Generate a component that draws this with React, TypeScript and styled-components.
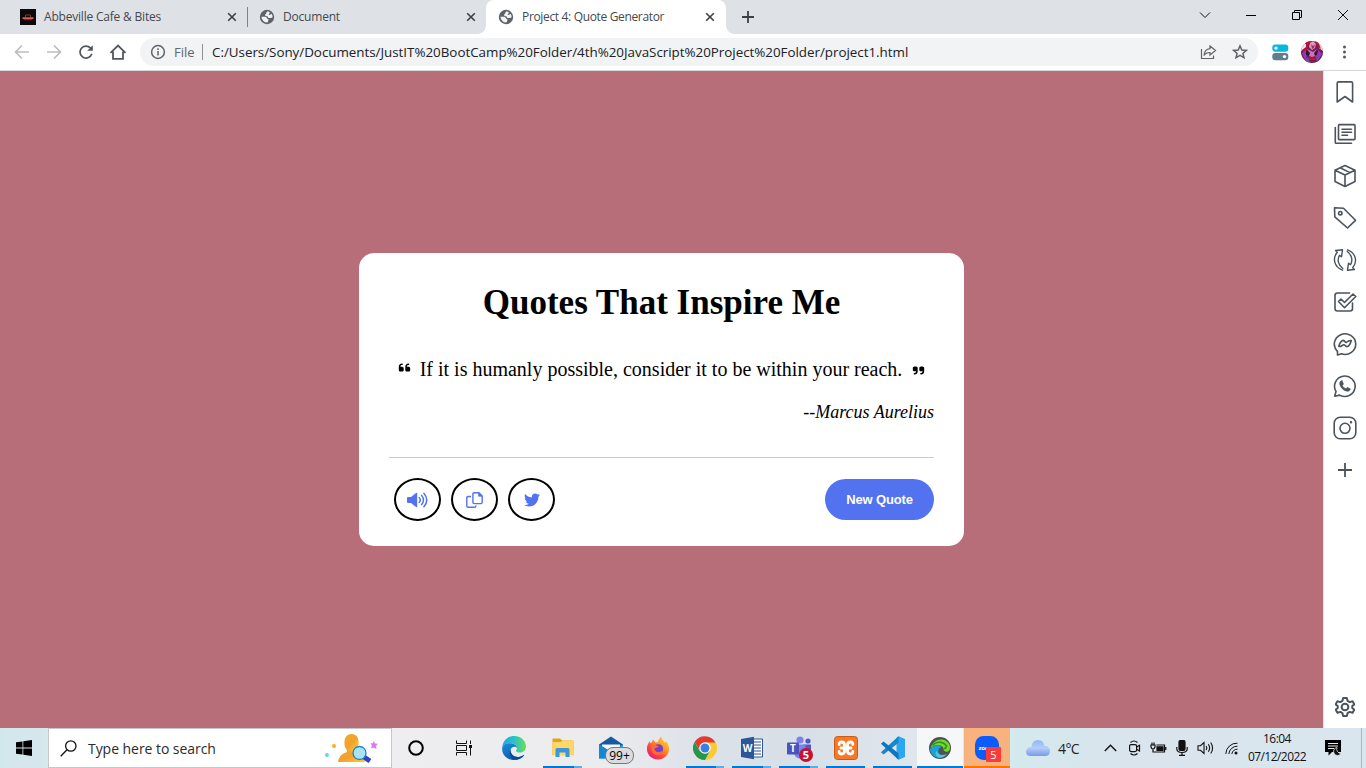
import React from "react";
import styled, { createGlobalStyle } from "styled-components";
import { FaTwitter, FaQuoteLeft, FaQuoteRight } from "react-icons/fa6";

const UI_FONT = '"Open Sans", "Noto Sans", sans-serif';

const GlobalStyle = createGlobalStyle`
  * { box-sizing: border-box; }
  body { margin: 0; overflow: hidden; }
  svg { display: block; flex: none; }
`;

const Screen = styled.div`
  display: flex;
  flex-direction: column;
  width: 1366px;
  height: 768px;
  font-family: ${UI_FONT};
  white-space: nowrap;
`;

/* Browser chrome */
const TabStrip = styled.div`
  display: flex;
  height: 34px;
  background: #dee1e6;
`;

const Tab = styled.div<{ $width: number; $left: number; $right: number; $active?: boolean; $divider?: boolean }>`
  position: relative;
  display: flex;
  align-items: center;
  width: ${(p) => p.$width}px;
  padding: 0 ${(p) => p.$right}px 0 ${(p) => p.$left}px;
  background: ${(p) => (p.$active ? "#fff" : "transparent")};
  border-radius: 8px 8px 0 0;
  ${(p) =>
    p.$divider &&
    `&::after { content: ""; position: absolute; right: 0; top: 7px; width: 1px; height: 20px; background: #808387; }`}
  ${(p) =>
    p.$active &&
    `&::before, &::after { content: ""; position: absolute; bottom: 0; width: 8px; height: 8px; }
     &::before { left: -8px; background: radial-gradient(circle at 0 0, transparent 7.5px, #fff 8px); }
     &::after { right: -8px; background: radial-gradient(circle at 100% 0, transparent 7.5px, #fff 8px); }`}
`;

const TabTitle = styled.span<{ $spacing?: number }>`
  flex: 1;
  margin-left: 8px;
  font-size: 12px;
  line-height: 16px;
  letter-spacing: ${(p) => p.$spacing ?? -0.2}px;
  color: #45494d;
`;

const NewTab = styled.div`
  display: flex;
  align-items: center;
  width: 44px;
  padding-left: 16px;
`;

const WindowButtons = styled.div`
  display: flex;
  margin-left: auto;
  height: 29px;
`;

const WindowButton = styled.div`
  display: flex;
  align-items: center;
  justify-content: center;
  width: 46px;
`;

const Toolbar = styled.div`
  display: flex;
  align-items: center;
  height: 37px;
  padding-left: 6px;
  background: #fff;
  border-bottom: 1px solid #d5d7da;
`;

const NavButton = styled.div`
  display: flex;
  justify-content: center;
  width: 32px;
`;

const AddressBar = styled.div`
  display: flex;
  align-items: center;
  width: 1118px;
  height: 28px;
  margin-left: 6px;
  padding: 0 10px 0 10px;
  border-radius: 14px;
  background: #f1f3f4;
`;

const Scheme = styled.span`
  width: 28px;
  margin-left: 8px;
  font-size: 13px;
  line-height: 18px;
  color: #63676c;
`;

const AddressDivider = styled.span`
  width: 1px;
  height: 16px;
  background: #8f9297;
`;

const Url = styled.span`
  flex: 1;
  margin-left: 9px;
  font-size: 13.4px;
  line-height: 18px;
  letter-spacing: -0.025px;
  color: #202124;
`;

const AddressActions = styled.div`
  display: flex;
  gap: 15px;
`;

const Extensions = styled.div`
  display: flex;
  align-items: center;
  margin-left: 14px;
  gap: 12px;
`;

/* Page */
const Middle = styled.div`
  display: flex;
  height: 657px;
`;

const Page = styled.main`
  display: flex;
  align-items: center;
  justify-content: center;
  width: 1323px;
  background: #b76e79;
  font-family: "Liberation Serif", "Times New Roman", serif;
  color: #000;
`;

const Card = styled.section`
  width: 605px;
  height: 293px;
  padding: 30px 30px 25px;
  border-radius: 15px;
  background: #fff;
`;

const Title = styled.h1`
  margin: 0;
  font-size: 35px;
  line-height: 40px;
  font-weight: 700;
  text-align: center;
`;

const QuoteLine = styled.div`
  display: flex;
  justify-content: center;
  margin-top: 34px;
  font-size: 20px;
  line-height: 24px;
`;

const QuoteText = styled.p`
  margin: 0 10px 0 9px;
`;

const QuoteMark = styled.span<{ $drop: number }>`
  padding-top: ${(p) => p.$drop}px;
  font-size: 13px;
`;

const Author = styled.p`
  margin: 21px 0 0;
  font-size: 18px;
  line-height: 20px;
  font-style: italic;
  text-align: right;
`;

const CardFooter = styled.footer`
  display: flex;
  align-items: flex-start;
  justify-content: space-between;
  margin-top: 35px;
  padding-top: 20px;
  border-top: 1px solid #ccc;
`;

const RoundButtons = styled.div`
  display: flex;
  gap: 10px;
  padding-left: 5px;
`;

const RoundButton = styled.div`
  display: flex;
  align-items: center;
  justify-content: center;
  width: 47px;
  height: 43px;
  border: 2px solid #000;
  border-radius: 50%;
  font-size: 16px;
  color: #5372f0;
`;

const NewQuote = styled.button`
  width: 109px;
  height: 41px;
  margin-top: 1px;
  padding: 0;
  border: 0;
  border-radius: 30px;
  background: #5372f0;
  color: #fff;
  font: 700 13px "Liberation Sans", Arial, sans-serif;
  letter-spacing: -0.15px;
`;

const SideBar = styled.aside`
  display: flex;
  flex-direction: column;
  align-items: center;
  width: 43px;
  padding-bottom: 9px;
  border-left: 1px solid #e3e3e6;
  background: #fff;
`;

const SideItem = styled.div<{ $last?: boolean }>`
  display: flex;
  align-items: center;
  justify-content: center;
  height: ${(p) => (p.$last ? 24 : 42)}px;
  margin-top: ${(p) => (p.$last ? "auto" : "0")};
`;

/* Windows taskbar */
const Taskbar = styled.div`
  display: flex;
  height: 40px;
  background: linear-gradient(90deg, #d2e7ec 0, #d7e7ec 48px, #eeedf0 391px, #ececef 600px, #dde2e9 700px, #d7dfe7 800px, #e0e6ec 915px, #d3eaee 1012px, #d9e4ed 1120px, #dae6ee 1366px);
`;

const StartButton = styled.div`
  display: flex;
  align-items: center;
  justify-content: center;
  width: 48px;
`;

const SearchBox = styled.div`
  display: flex;
  align-items: center;
  width: 344px;
  padding: 0 11px 0 11px;
  border: 1px solid #c4c8ca;
  background: #fff;
`;

const SearchLabel = styled.span`
  flex: 1;
  margin-left: 11px;
  font-size: 14px;
  letter-spacing: -0.05px;
  color: #2b2b2b;
`;

const AppSlot = styled.div<{ $w: number; $bg?: string; $bar?: "multi" | "single" | "wide" | "alert"; $gap?: number }>`
  position: relative;
  display: flex;
  align-items: center;
  justify-content: center;
  width: ${(p) => p.$w}px;
  margin-left: ${(p) => p.$gap || 0}px;
  background: ${(p) => p.$bg || "transparent"};
  &::after {
    content: "";
    display: ${(p) => (p.$bar ? "block" : "none")};
    position: absolute;
    bottom: 0;
    left: ${(p) => (p.$bar === "multi" || p.$bar === "single" ? 4 : 0)}px;
    right: ${(p) => (p.$bar === "multi" || p.$bar === "single" ? 4 : 0)}px;
    height: 2px;
    background: ${(p) =>
      p.$bar === "alert"
        ? "#ff7300"
        : p.$bar === "multi"
          ? "linear-gradient(90deg, #0078d7 0 79%, #62abe3 79%)"
          : "#0078d7"};
  }
`;

const MailBadge = styled.span`
  position: absolute;
  left: 19px;
  top: 19px;
  width: 29px;
  height: 17px;
  border: 1px solid #777;
  border-radius: 8px;
  background: #dcdcdc;
  font-size: 12px;
  font-weight: 500;
  line-height: 15px;
  text-align: center;
  color: #000;
`;

const CountBadge = styled.span<{ $square?: boolean; $left: number }>`
  position: absolute;
  left: ${(p) => p.$left}px;
  top: ${(p) => (p.$square ? 19 : 20)}px;
  width: ${(p) => (p.$square ? 15 : 14)}px;
  height: ${(p) => (p.$square ? 15 : 14)}px;
  border-radius: ${(p) => (p.$square ? "1px" : "50%")};
  background: ${(p) => (p.$square ? "#fb3b3b" : "#c4122f")};
  font-size: 11px;
  font-weight: ${(p) => (p.$square ? 400 : 700)};
  line-height: ${(p) => (p.$square ? 15 : 14)}px;
  text-align: center;
  color: #fff;
`;

const Tray = styled.div`
  display: flex;
  align-items: center;
  flex: 1;
  padding-left: 15px;
`;

const Temperature = styled.span`
  width: 40px;
  margin-left: 7px;
  font-size: 14px;
  letter-spacing: -0.6px;
  color: #222;
`;

const TrayIcon = styled.div`
  display: flex;
  align-items: center;
  justify-content: center;
  width: 24px;
`;

const WifiSlot = styled(TrayIcon)`
  width: 25px;
  margin-left: 1px;
`;

const Clock = styled.div`
  width: 66px;
  font-size: 12px;
  line-height: 18px;
  letter-spacing: -0.55px;
  text-align: center;
  color: #111;
`;

const Notifications = styled.div`
  display: flex;
  justify-content: center;
  width: 46px;
`;

const DesktopEdge = styled.div`
  width: 1px;
  height: 40px;
  margin-left: auto;
  margin-right: 4px;
  background: #a9b5bc;
`;

const Globe = () => (
  <svg width="16" height="16" viewBox="0 0 16 16">
    <circle cx="8" cy="8" r="7.2" fill="#5f6368" />
    <path d="M2.400 7.800H6.500Q7.800 8.200 8.200 9.700Q9.500 9.800 9.500 11L8.500 13.600Q3.200 13.500 2.400 7.800Z" fill="#f1f2f4" />
    <path d="M8.800 2.300Q6.800 3.500 7.200 4.800Q6 5 6 6.300Q6.500 7.300 8.300 7.200L9.500 9H12L13.600 8.200Q13.800 6.500 12.500 4.800L10.800 6L9.300 5.500Q11 4.800 10.600 3Z" fill="#f1f2f4" />
  </svg>
);

const CloseX = () => (
  <svg width="10" height="10" viewBox="0 0 10 10" stroke="#3c4043" strokeWidth="1.6">
    <path d="M1.200 1.200L8.800 8.800M8.800 1.200L1.200 8.800" />
  </svg>
);

const CafeIcon = () => (
  <svg width="16" height="16" viewBox="0 0 16 16">
    <path fill="#0c0a0b" d="M0 0h16v16H0z" />
    <path d="M5.500 8.500V6h5v2.500" fill="none" stroke="#7d3a36" />
    <path d="M2.500 9.200h11" stroke="#df5d4e" strokeWidth="1.800" />
    <path d="M4 10.700h8" stroke="#7d332e" />
  </svg>
);

const Avatar = () => (
  <svg width="22" height="22" viewBox="0 0 22 22">
    <defs>
      <clipPath id="face"><circle cx="11" cy="11" r="11" /></clipPath>
    </defs>
    <g clipPath="url(#face)">
      <path fill="#75204e" d="M0 0h22v22H0z" />
      <path fill="#e9e3ec" d="M0 3h6l-1 4-5 3zM16 1l6 1v8l-4-3z" />
      <path fill="#b5123b" d="M5 0h4l-2 6-4 6-2-3 4-3zM14 0h3l3 8-3-2z" />
      <path fill="#e39bb8" d="M9 2l3-2 3 3-1 4-3 2-3-3z" />
      <path fill="#a22f68" d="M10 3l2 2 2-2-1 4-2 1z" />
      <path fill="#9a35bd" d="M1 12l4-3 1 5-2 5zM17 9l4 4-4 6-3-4z" />
      <path fill="#331438" d="M5 9l5 4-2 2-3-1zM12 13l5-4-1 5-3 1z" />
      <path fill="#c774bd" d="M6 8l4 2 2 1 4-3-3 4 1 3-3 1-3-1 1-3z" />
      <path fill="#c30f31" d="M8 17l3-1 4 1v2H8z" />
      <path fill="#6d4da6" d="M4 18l3-2 2 5H5zM15 17l4-1-3 5z" />
    </g>
  </svg>
);

const SideSvg = ({ children }: { children: React.ReactNode }) => (
  <svg width="24" height="24" viewBox="0 0 24 24" fill="none" stroke="#4b535c" strokeWidth="1.600" strokeLinejoin="round" strokeLinecap="round">
    {children}
  </svg>
);

const sideIcons: React.ReactNode[] = [
  <path d="M4.200 3.200Q4.200 1.900 5.500 1.900H18.300Q19.600 1.900 19.600 3.200V22L12 16.500L4.200 22Z" />,
  <>
    <rect x="5.500" y="2.600" width="16.500" height="15" rx=".8" />
    <path d="M2.300 5.500V20.500Q2.300 21.200 3 21.200H18.500M9 7.200H18.500M9 10.200H18.500M9 13.200H14.500" />
  </>,
  <path d="M12 1.500L22 6.200V17.500L12 22.500L2 17.500V6.200ZM2 6.200L12 11L22 6.200M12 11V22.500M7 3.800L17 8.600" />,
  <>
    <path d="M1.500 1.800L10.500 2.300L22.500 14.300L14.500 22L1.800 10.800Z" />
    <circle cx="7.300" cy="7.200" r="1.700" />
  </>,
  <g strokeWidth="1.400">
    <path d="M9.500 1.800L8.500 8.800L6.500 7.300C4 11.500 5 17 9.800 20.500M9.500 1.800L2.500 2.500L4.300 4.200C-.6 10 .8 19 9.500 22.200" />
    <path d="M14.500 22.200L15.500 15.200L17.500 16.700C20 12.500 19 7 14.200 3.500M14.500 22.200L21.500 21.500L19.700 19.800C24.600 14 23.200 5 14.500 1.800" />
  </g>,
  <>
    <path d="M16.500 3H4.500Q2 3 2 5.500V18.500Q2 21 4.500 21H17Q19.500 21 19.500 18.500V13" />
    <path d="M5.500 11.500L8 9L11.500 12.500L20 4L22.800 6.500L11.500 17.700Z" />
  </>,
  <>
    <path d="M4.500 19.400A10.700 10.300 0 1 1 8.500 21.800L4.500 23Z" />
    <path d="M5.800 14.500C6 12.500 8 8.500 10.200 8.400C11.800 8.400 12 10.700 13.200 10.400C14.500 10 15.500 8.200 18.300 8.500C17.600 11 16 14.500 13.800 14.600C12.200 14.700 12 12.400 10.800 12.700C9.200 13.100 8.500 14.700 5.800 14.500Z" />
  </>,
  <>
    <path d="M1.700 22.200L3 17.500A10.300 10.200 0 1 1 6.700 21.100Z" />
    <path fill="#4b535c" strokeWidth="0.600" d="M9 6.800L10.500 10L9.300 11.500C10.300 13.400 11.500 14.200 12.800 14.800L14.200 13.400L17.300 14.800C17.200 16.500 16 17.400 14.500 17.300C10.600 16.900 7 13.200 6.700 9.500C6.600 8.100 7.400 6.800 9 6.800Z" />
  </>,
  <>
    <rect x="1.200" y="1.200" width="21.600" height="21.600" rx="6" />
    <circle cx="12" cy="12.300" r="5" />
    <circle cx="18" cy="6.200" r=".5" fill="#4b535c" />
  </>,
  <path d="M12 5V19M5 12H19" strokeLinecap="butt" strokeWidth="1.800" />,
];

const SettingsIcon = () => (
  <svg width="20" height="22" viewBox="1 0 22 24" fill="none" stroke="#4b535c" strokeWidth="2.200" strokeLinejoin="round">
    <path d="M10 2H14L14.800 5.200L17.200 6.600L20.300 5.600L22.300 9.100L20 11V13L22.300 15L20.300 18.400L17.200 17.400L14.800 18.800L14 22H10L9.200 18.800L6.800 17.400L3.700 18.400L1.700 15L4 13V11L1.700 9.100L3.700 5.600L6.800 6.600L9.200 5.200Z" />
    <circle cx="12" cy="12" r="3.700" />
  </svg>
);

const SpeakerIcon = () => (
  <svg width="21" height="16" viewBox="0 0 21 16">
    <path d="M0 6Q0 5 1 5H4L9 1Q10.200 .4 10.200 1.800V14.200Q10.200 15.600 9 15L4 11H1Q0 11 0 10Z" fill="#5372f0" />
    <path d="M12.300 5.600Q14.200 8 12.300 10.400M14.600 3.400Q18.300 8 14.600 12.600M16.900 1.200Q22.700 8 16.900 14.800" fill="none" stroke="#5372f0" strokeWidth="1.500" strokeLinecap="round" />
  </svg>
);

const CopyIcon = () => (
  <svg width="17" height="16" viewBox="0 0 17 16" fill="none" stroke="#5372f0" strokeWidth="1.400" strokeLinejoin="round">
    <path d="M5 4.500H2.200Q.8 4.500 .8 5.900V13.900Q.8 15.300 2.200 15.300H8.500Q9.900 15.300 9.900 13.900V13.500" />
    <path d="M8.300 .7H13L16.200 3.900V10.200Q16.200 11.600 14.800 11.600H8.300Q6.900 11.600 6.900 10.200V2.100Q6.900 .7 8.300 .7Z" />
    <path d="M12.500 .7V4.300H16.200Z" fill="#5372f0" strokeWidth=".6" />
  </svg>
);

const SearchArt = () => (
  <svg width="56" height="30" viewBox="0 0 56 30">
    <defs>
      <linearGradient id="person" x1="0" x2="1" y2="1"><stop stopColor="#eab12c" /><stop offset=".5" stopColor="#f4a02b" /><stop offset="1" stopColor="#f8cf36" /></linearGradient>
    </defs>
    <path d="M14 29C15 22 20 20 23 19V16H34V19C38 20 41 24 41 29Z" fill="url(#person)" />
    <rect x="20.500" y="1" width="14" height="17.500" rx="6.800" fill="url(#person)" />
    <circle cx="3" cy="22" r="2" fill="#6bd4e4" />
    <circle cx="10" cy="13" r="2" fill="#ffac16" />
    <path d="M40 24L46 28" stroke="#3740c8" strokeWidth="5" />
    <circle cx="35.500" cy="20" r="6.500" fill="#a9e4f6" stroke="#2584cf" strokeWidth="1.300" />
    <path d="M49.500 8L51 10.500L54 10.700L52 13L52.500 16L49.800 14.800L47 15.300L47.800 12.500L46.500 10.300L49 10.300Z" fill="#e279f5" />
  </svg>
);

const EdgeIcon = () => (
  <svg width="24" height="24" viewBox="0 0 24 24">
    <defs>
      <linearGradient id="edgeA" x1="0" x2="1"><stop stopColor="#20a7e5" /><stop offset=".5" stopColor="#27c3c7" /><stop offset="1" stopColor="#6adf50" /></linearGradient>
      <linearGradient id="edgeB" x1="0" y1="0" x2=".6" y2="1"><stop stopColor="#1a8fdf" /><stop offset="1" stopColor="#0c59a4" /></linearGradient>
    </defs>
    <path d="M.3 11C1 4 6 0 12 0C19 0 24 5 24 10.500C24 14 21.500 16.500 18 16.500C15.500 16.500 14 15.500 14 14.700C14 14 15 13.700 15 12C15 9 12 7.500 9 7.300C5 7 1.500 8.500.3 11Z" fill="url(#edgeA)" />
    <path d="M.2 12C.5 9 4 7 8 7.200C12 7.300 15 9.300 15 12C13.500 10 9.500 10.200 8.700 13.500C8 18 12 22 18 20.800C20 20.400 21.300 19.300 22.200 18.800C22.200 20 18 24 12 24C5 24-.4 18.500.2 12Z" fill="url(#edgeB)" />
    <path d="M8.700 13.500C8 18 12 22 18 20.800C20 20.400 21.300 19.300 22.200 18.800C21 21.500 17.500 23.800 14 23.800C9 23.800 6.200 18 8.700 13.500Z" fill="#0a4a94" />
  </svg>
);

const ExplorerIcon = () => (
  <svg width="22" height="20" viewBox="0 0 22 20">
    <path d="M.5 1Q.5.5 1 .5H8L10 2.500H20.500Q21.500 2.500 21.500 3.500V17H.5Z" fill="#e0a21b" />
    <path d="M.5 4H9L10.500 2.500H21.500V17.500H.5Z" fill="#ffd766" />
    <path d="M3.500 19V11.500Q3.500 10 5 10H16Q17.500 10 17.500 11.500V19H13.500V14.500H7.500V19Z" fill="#3b97dc" />
  </svg>
);

const MailIcon = () => (
  <svg width="26" height="24" viewBox="0 0 26 24">
    <path d="M1 8.500L13 .5L25 8.500V12H1Z" fill="#1559a5" />
    <path d="M4 8.500H22V16H4Z" fill="#f5f7f8" />
    <path d="M1 8.500L13 16L25 8.500V22.500H1Z" fill="#2ba5e6" />
    <path d="M1 8.500L25 22.500H1Z" fill="#1487d4" />
  </svg>
);

const FirefoxIcon = () => (
  <svg width="24" height="24" viewBox="0 0 24 24">
    <defs>
      <linearGradient id="fox" x1="1" x2=".2" y2="1"><stop stopColor="#ffe43b" /><stop offset=".4" stopColor="#ff9c24" /><stop offset=".7" stopColor="#fb483e" /><stop offset="1" stopColor="#ed1679" /></linearGradient>
    </defs>
    <path d="M1 14C.7 9 2.500 7 4 5L4.500 7.500L6 6L7 3.500L9.500 6.500L12 6C12.500 3 14 1.500 15.500.5C15.500 4 18 4.500 19 7L20 5C22 7.500 23 10 23 13C23 19 18 23.500 12 23.500C6 23.500 1.500 19 1 14Z" fill="url(#fox)" />
    <circle cx="12.300" cy="13" r="4.800" fill="#7040d3" />
    <path d="M5 10C7.500 8.500 10 9 13 10.500C11 10.800 10.500 12.500 8.300 12.200C9 16.500 14 17.500 16.300 14.500C17 20 8 21 6 15.500Z" fill="#ff6a33" />
  </svg>
);

const ChromeIcon = () => (
  <svg width="24" height="24" viewBox="0 0 24 24">
    <path d="M12 6H22.400A12 12 0 0 1 12 24L16.800 14.800Z" fill="#fcc934" />
    <path d="M12 6.500H22.400A12 12 0 0 0 1.600 6L7.100 15Z" fill="#e33b2e" />
    <path d="M1.600 6L6.800 15L16.800 15L12 24A12 12 0 0 1 1.600 6Z" fill="#26964b" />
    <circle cx="12" cy="12" r="5.800" fill="#fff" />
    <circle cx="12" cy="12" r="4.500" fill="#3a7ee8" />
  </svg>
);

const LogoLetter = styled.text`
  font-family: ${UI_FONT};
  font-weight: 700;
  fill: #fff;
`;

const WordIcon = () => (
  <svg width="24" height="24" viewBox="0 0 24 24">
    <path d="M13 3H22.500V21H13Z" fill="#fff" stroke="#2b579a" />
    <path d="M14 6H21M14 9H21M14 12H21M14 15H21M14 18H21" stroke="#2b579a" />
    <path d="M1 3L14 .7V23.300L1 21Z" fill="#2b579a" />
    <LogoLetter x="2.800" y="16" fontSize="10">W</LogoLetter>
  </svg>
);

const TeamsIcon = () => (
  <svg width="26" height="24" viewBox="0 0 26 24">
    <circle cx="14" cy="4" r="3.600" fill="#7b83eb" />
    <circle cx="22" cy="5" r="2.600" fill="#5059c9" />
    <path d="M17 8.500H25V15Q24 19 20 19Z" fill="#5059c9" />
    <path d="M8 8.500H19.500V16Q18.500 22 13.500 22.500Q9 22 8 17Z" fill="#7b83eb" />
    <rect x="1" y="6.500" width="12" height="12" rx="1" fill="#4b53bc" />
    <LogoLetter x="4" y="16" fontSize="10">T</LogoLetter>
  </svg>
);

const XamppIcon = () => (
  <svg width="24" height="24" viewBox="0 0 24 24">
    <rect x=".5" y=".5" width="23" height="23" rx="3" fill="#f47a28" stroke="#c95a17" />
    <path
      d="M5.200 8.500Q5 6 7.500 6Q10.500 6 10.500 9V15Q10.500 18 7.500 18Q5 18 5.200 15.500M18.800 8.500Q19 6 16.500 6Q13.500 6 13.500 9V15Q13.500 18 16.500 18Q19 18 18.800 15.500M7 12H17"
      fill="none" stroke="#fff" strokeWidth="2.800" strokeLinecap="round" strokeLinejoin="round"
    />
  </svg>
);

const CodeIcon = () => (
  <svg width="24" height="24" viewBox="0 0 24 24">
    <path d="M17.500.3L24 3V21L17.500 23.700L15.500 22V2Z" fill="#2aa7f0" />
    <path d="M17.500.3V6.800L2.500 18.500L0 16.200Z" fill="#1786cb" />
    <path d="M0 7.800L2.500 5.500L17.500 17.200V23.700Z" fill="#0f76bd" />
  </svg>
);

const EdgeDevIcon = () => (
  <svg width="22" height="22" viewBox="0 0 22 22">
    <circle cx="11" cy="11" r="11" fill="#4d5354" />
    <path d="M1.500 11C4 5 8 2 13 2.500C19 3.500 22 8 20.800 12.500C19 16 14 15.500 14.500 11C12 7 6 7 1.500 11Z" fill="#6fdb25" />
    <path d="M3.500 8.500C7 4 14 4 17.500 9Q17 11.500 15 11.500" stroke="#35902a" fill="none" strokeWidth="1.500" />
    <path d="M1 12C4 8 10 7 12 10C8 12 8 18 15 19C10 23 2 20 1 12Z" fill="#19a3dc" />
    <path d="M8 14C8 18 13 19 18 17C16 20 12 21.500 9 20.500C6 18 6 15 8 14Z" fill="#50c5dc" />
  </svg>
);

const ZoomIcon = () => (
  <svg width="24" height="24" viewBox="0 0 24 24">
    <rect width="24" height="24" rx="8.500" fill="#0b5cff" />
    <LogoLetter x="3.500" y="14" fontSize="6" textLength="10">zoo</LogoLetter>
  </svg>
);

const CloudIcon = () => (
  <svg width="26" height="18" viewBox="0 0 26 18">
    <defs>
      <linearGradient id="cloud" x2="0" y2="1"><stop stopColor="#90b6f7" /><stop offset=".5" stopColor="#b5cdf8" /><stop offset="1" stopColor="#7799e6" /></linearGradient>
    </defs>
    <path d="M6 17Q1 17 1 12.500Q1.500 8 6.500 8Q7 1 13 1Q18.500 1 19.500 7Q25 7 25 12Q25 17 20 17Z" fill="url(#cloud)" />
  </svg>
);

const line = { fill: "none", stroke: "#111", strokeWidth: 1.2 };

const App = () => (
  <Screen>
    <GlobalStyle />
    <TabStrip>
      <Tab $width={248} $left={20} $right={11} $divider>
        <CafeIcon />
        <TabTitle>Abbeville Cafe &amp; Bites</TabTitle>
        <CloseX />
      </Tab>
      <Tab $width={238} $left={11} $right={10}>
        <Globe />
        <TabTitle>Document</TabTitle>
        <CloseX />
      </Tab>
      <Tab $width={240} $left={12} $right={11} $active>
        <Globe />
        <TabTitle $spacing={-0.34}>Project 4: Quote Generator</TabTitle>
        <CloseX />
      </Tab>
      <NewTab>
        <svg width="12" height="12" stroke="#3c4043" strokeWidth="1.800"><path d="M6 0V12M0 6H12" /></svg>
      </NewTab>
      <WindowButtons>
        <WindowButton><svg width="12" height="12" {...line} strokeWidth="1"><path d="M1 3.500L6 8.500L11 3.500" /></svg></WindowButton>
        <WindowButton><svg width="10" height="10" stroke="#000"><path d="M0 5.500H10" /></svg></WindowButton>
        <WindowButton><svg width="10" height="10" fill="none" stroke="#000"><path d="M.5 2.500H7.500V9.500H.5ZM2.500 2.500V.5H9.500V7.500H7.500" /></svg></WindowButton>
        <WindowButton><svg width="10" height="10" {...line} strokeWidth="1"><path d="M0 0L10 10M10 0L0 10" /></svg></WindowButton>
      </WindowButtons>
    </TabStrip>

    <Toolbar>
      <NavButton><svg width="16" height="16" fill="none" stroke="#bbbdc0" strokeWidth="1.700"><path d="M15 8H2M8 1.500L1.500 8L8 14.500" /></svg></NavButton>
      <NavButton><svg width="16" height="16" fill="none" stroke="#bbbdc0" strokeWidth="1.700"><path d="M1 8H14M8 1.500L14.500 8L8 14.500" /></svg></NavButton>
      <NavButton>
        <svg width="16" height="16" viewBox="0 0 16 16">
          <path d="M13.800 9.800A6 6 0 1 1 12.400 3.900L14 5.500" fill="none" stroke="#54585d" strokeWidth="1.700" />
          <path d="M14.800 1.200V6.800H9.200Z" fill="#54585d" />
        </svg>
      </NavButton>
      <NavButton><svg width="18" height="16" fill="none" stroke="#54585d" strokeWidth="1.800"><path d="M1.500 8.800L9 1.500L16.500 8.800M4 7.500V14.800H14V7.500" /></svg></NavButton>
      <AddressBar>
        <svg width="16" height="16" fill="none" stroke="#5f6368" strokeWidth="1.500"><circle cx="8" cy="8" r="6.400" /><path d="M8 7V11.500M8 4.300V6" /></svg>
        <Scheme>File</Scheme>
        <AddressDivider />
        <Url>C:/Users/Sony/Documents/JustIT%20BootCamp%20Folder/4th%20JavaScript%20Project%20Folder/project1.html</Url>
        <AddressActions>
          <svg width="17" height="16" fill="none" stroke="#5f6368" strokeWidth="1.200"><path d="M1.500 5V14.500H13.500V11.500M10 2L15.500 6.500L10 11V8.500C7 8.500 5.200 9.500 4 11.500C4.300 7.500 6.500 5 10 4.600Z" /></svg>
          <svg width="16" height="16" viewBox="0 0 16 16" fill="none" stroke="#5f6368" strokeWidth="1.500"><path d="M8 1.800L9.800 6L14.300 6.400L10.900 9.400L12 13.800L8 11.400L4 13.800L5.100 9.400L1.700 6.400L6.200 6Z" /></svg>
        </AddressActions>
      </AddressBar>
      <Extensions>
        <svg width="17" height="17" viewBox="0 0 17 17">
          <rect x=".3" y=".5" width="16" height="7.200" rx="3" fill="#04b9dc" /><circle cx="4" cy="4.100" r="1.700" fill="#fff" />
          <rect x=".3" y="9" width="16" height="7.200" rx="3" fill="#607d8b" /><circle cx="12.500" cy="12.600" r="1.700" fill="#fff" />
        </svg>
        <Avatar />
        <svg width="20" height="14" fill="#54585d"><circle cx="9.500" cy="2" r="1.500" /><circle cx="9.500" cy="7" r="1.500" /><circle cx="9.500" cy="12" r="1.500" /></svg>
      </Extensions>
    </Toolbar>

    <Middle>
      <Page>
        <Card>
          <Title>Quotes That Inspire Me</Title>
          <QuoteLine>
            <QuoteMark $drop={4}><FaQuoteLeft /></QuoteMark>
            <QuoteText>If it is humanly possible, consider it to be within your reach.</QuoteText>
            <QuoteMark $drop={7}><FaQuoteRight /></QuoteMark>
          </QuoteLine>
          <Author>--Marcus Aurelius</Author>
          <CardFooter>
            <RoundButtons>
              <RoundButton><SpeakerIcon /></RoundButton>
              <RoundButton><CopyIcon /></RoundButton>
              <RoundButton><FaTwitter /></RoundButton>
            </RoundButtons>
            <NewQuote>New Quote</NewQuote>
          </CardFooter>
        </Card>
      </Page>
      <SideBar>
        {sideIcons.map((icon, i) => (
          <SideItem key={i}><SideSvg>{icon}</SideSvg></SideItem>
        ))}
        <SideItem $last><SettingsIcon /></SideItem>
      </SideBar>
    </Middle>

    <Taskbar>
      <StartButton>
        <svg width="16" height="16" viewBox="0 0 16 16"><path d="M0 2.300L6.500 1.400V7.600H0ZM7.300 1.300L16 0V7.600H7.300ZM0 8.400H6.500V14.600L0 13.700ZM7.300 8.400H16V16L7.300 14.700Z" /></svg>
      </StartButton>
      <SearchBox>
        <svg width="17" height="17" {...line} strokeWidth="1.300"><circle cx="10.800" cy="6" r="5.200" /><path d="M7 9.700L.7 16.200" /></svg>
        <SearchLabel>Type here to search</SearchLabel>
        <SearchArt />
      </SearchBox>
      <AppSlot $w={48}><svg width="16" height="16" fill="none" stroke="#000" strokeWidth="2"><circle cx="8" cy="8" r="6.800" /></svg></AppSlot>
      <AppSlot $w={48}>
        <svg width="17" height="16" viewBox="0 0 17 16" fill="none" stroke="#111"><path d="M.5 .5V3.500H10.500V.5M.5 15.500V12.500H10.500V15.500M.5 5.500H10.500V10.500H.5ZM14.500 .5V4M14.500 8V15.500" /><path d="M13 5H16V8H13Z" fill="#111" stroke="none" /></svg>
      </AppSlot>
      <AppSlot $w={51}><EdgeIcon /></AppSlot>
      <AppSlot $w={47} $bar="multi"><ExplorerIcon /></AppSlot>
      <AppSlot $w={49}><MailIcon /><MailBadge>99+</MailBadge></AppSlot>
      <AppSlot $w={46}><FirefoxIcon /></AppSlot>
      <AppSlot $w={46} $gap={1} $bar="multi"><ChromeIcon /></AppSlot>
      <AppSlot $w={47} $bar="multi"><WordIcon /></AppSlot>
      <AppSlot $w={47} $bar="multi"><TeamsIcon /><CountBadge $left={24}>5</CountBadge></AppSlot>
      <AppSlot $w={47} $bar="single"><XamppIcon /></AppSlot>
      <AppSlot $w={47} $bar="single"><CodeIcon /></AppSlot>
      <AppSlot $w={46} $gap={1} $bar="wide" $bg="#f5f7f9"><EdgeDevIcon /></AppSlot>
      <AppSlot $w={46} $gap={1} $bar="alert" $bg="#f7b27e"><ZoomIcon /><CountBadge $square $left={22}>5</CountBadge></AppSlot>
      <Tray>
        <CloudIcon />
        <Temperature>4°C</Temperature>
        <TrayIcon><svg width="13" height="8" {...line} strokeWidth="1.400"><path d="M.8 7L6.500 1.300L12.200 7" /></svg></TrayIcon>
        <TrayIcon>
          <svg width="13" height="16" {...line}><rect x="1.600" y="4.600" width="7" height="7" rx="1.500" /><path d="M8.600 7L11.500 5.300V11L8.600 9.300M2.500 2.500Q6 -.5 9.500 2.500M2.500 13.500Q6 16.500 9.500 13.500" /></svg>
        </TrayIcon>
        <TrayIcon>
          <svg width="17" height="12" {...line}><path d="M6.500 3H14.500V10H5.500M15.800 5V8M1 3H5V5Q4.500 7 3 7Q1.500 7 1 5ZM2 .5V3M4 .5V3M3 7V10H5.500" /><path d="M7 4.800H13V8.300H7Z" fill="#111" /></svg>
        </TrayIcon>
        <TrayIcon>
          <svg width="12" height="16" {...line}><rect x="3" y=".5" width="6" height="10" rx="1.500" fill="#111" /><path d="M.8 7V9Q1 12.500 6 12.500Q11 12.500 11.200 9V7M6 12.500V15.500M3 15.400H9" /></svg>
        </TrayIcon>
        <TrayIcon>
          <svg width="18" height="14" {...line} strokeWidth="1.100"><path d="M1 4.700H3.500L7 1.500V12.500L3.500 9.300H1ZM9 5Q10.500 7 9 9M11.300 3.300Q14 7 11.300 10.700M13.700 1.500Q17.500 7 13.700 12.500" /></svg>
        </TrayIcon>
        <WifiSlot>
          <svg width="14" height="13" {...line} strokeWidth="1"><path d="M.8 12A11 11 0 0 1 12.500 1.200M3.800 12A8.500 8.500 0 0 1 12.500 4.200M6.800 12A6 6 0 0 1 12.500 7.200" /><circle cx="11" cy="11" r="1.500" fill="#111" stroke="none" /></svg>
        </WifiSlot>
        <Clock><div>16:04</div><div>07/12/2022</div></Clock>
        <Notifications>
          <svg width="17" height="16" viewBox="0 0 17 16"><path d="M0 0H16V12H7L3.500 15.500V12H0Z" /><path d="M3 3.500H13M3 6H13M3 8.500H9" stroke="#e3ebf0" /><path d="M12 7.500A4 4 0 1 0 16 13.500A4.500 4.500 0 0 1 12 7.500Z" fill="#111" stroke="#dce6ee" strokeWidth=".8" /></svg>
        </Notifications>
        <DesktopEdge />
      </Tray>
    </Taskbar>
  </Screen>
);

export default App;
